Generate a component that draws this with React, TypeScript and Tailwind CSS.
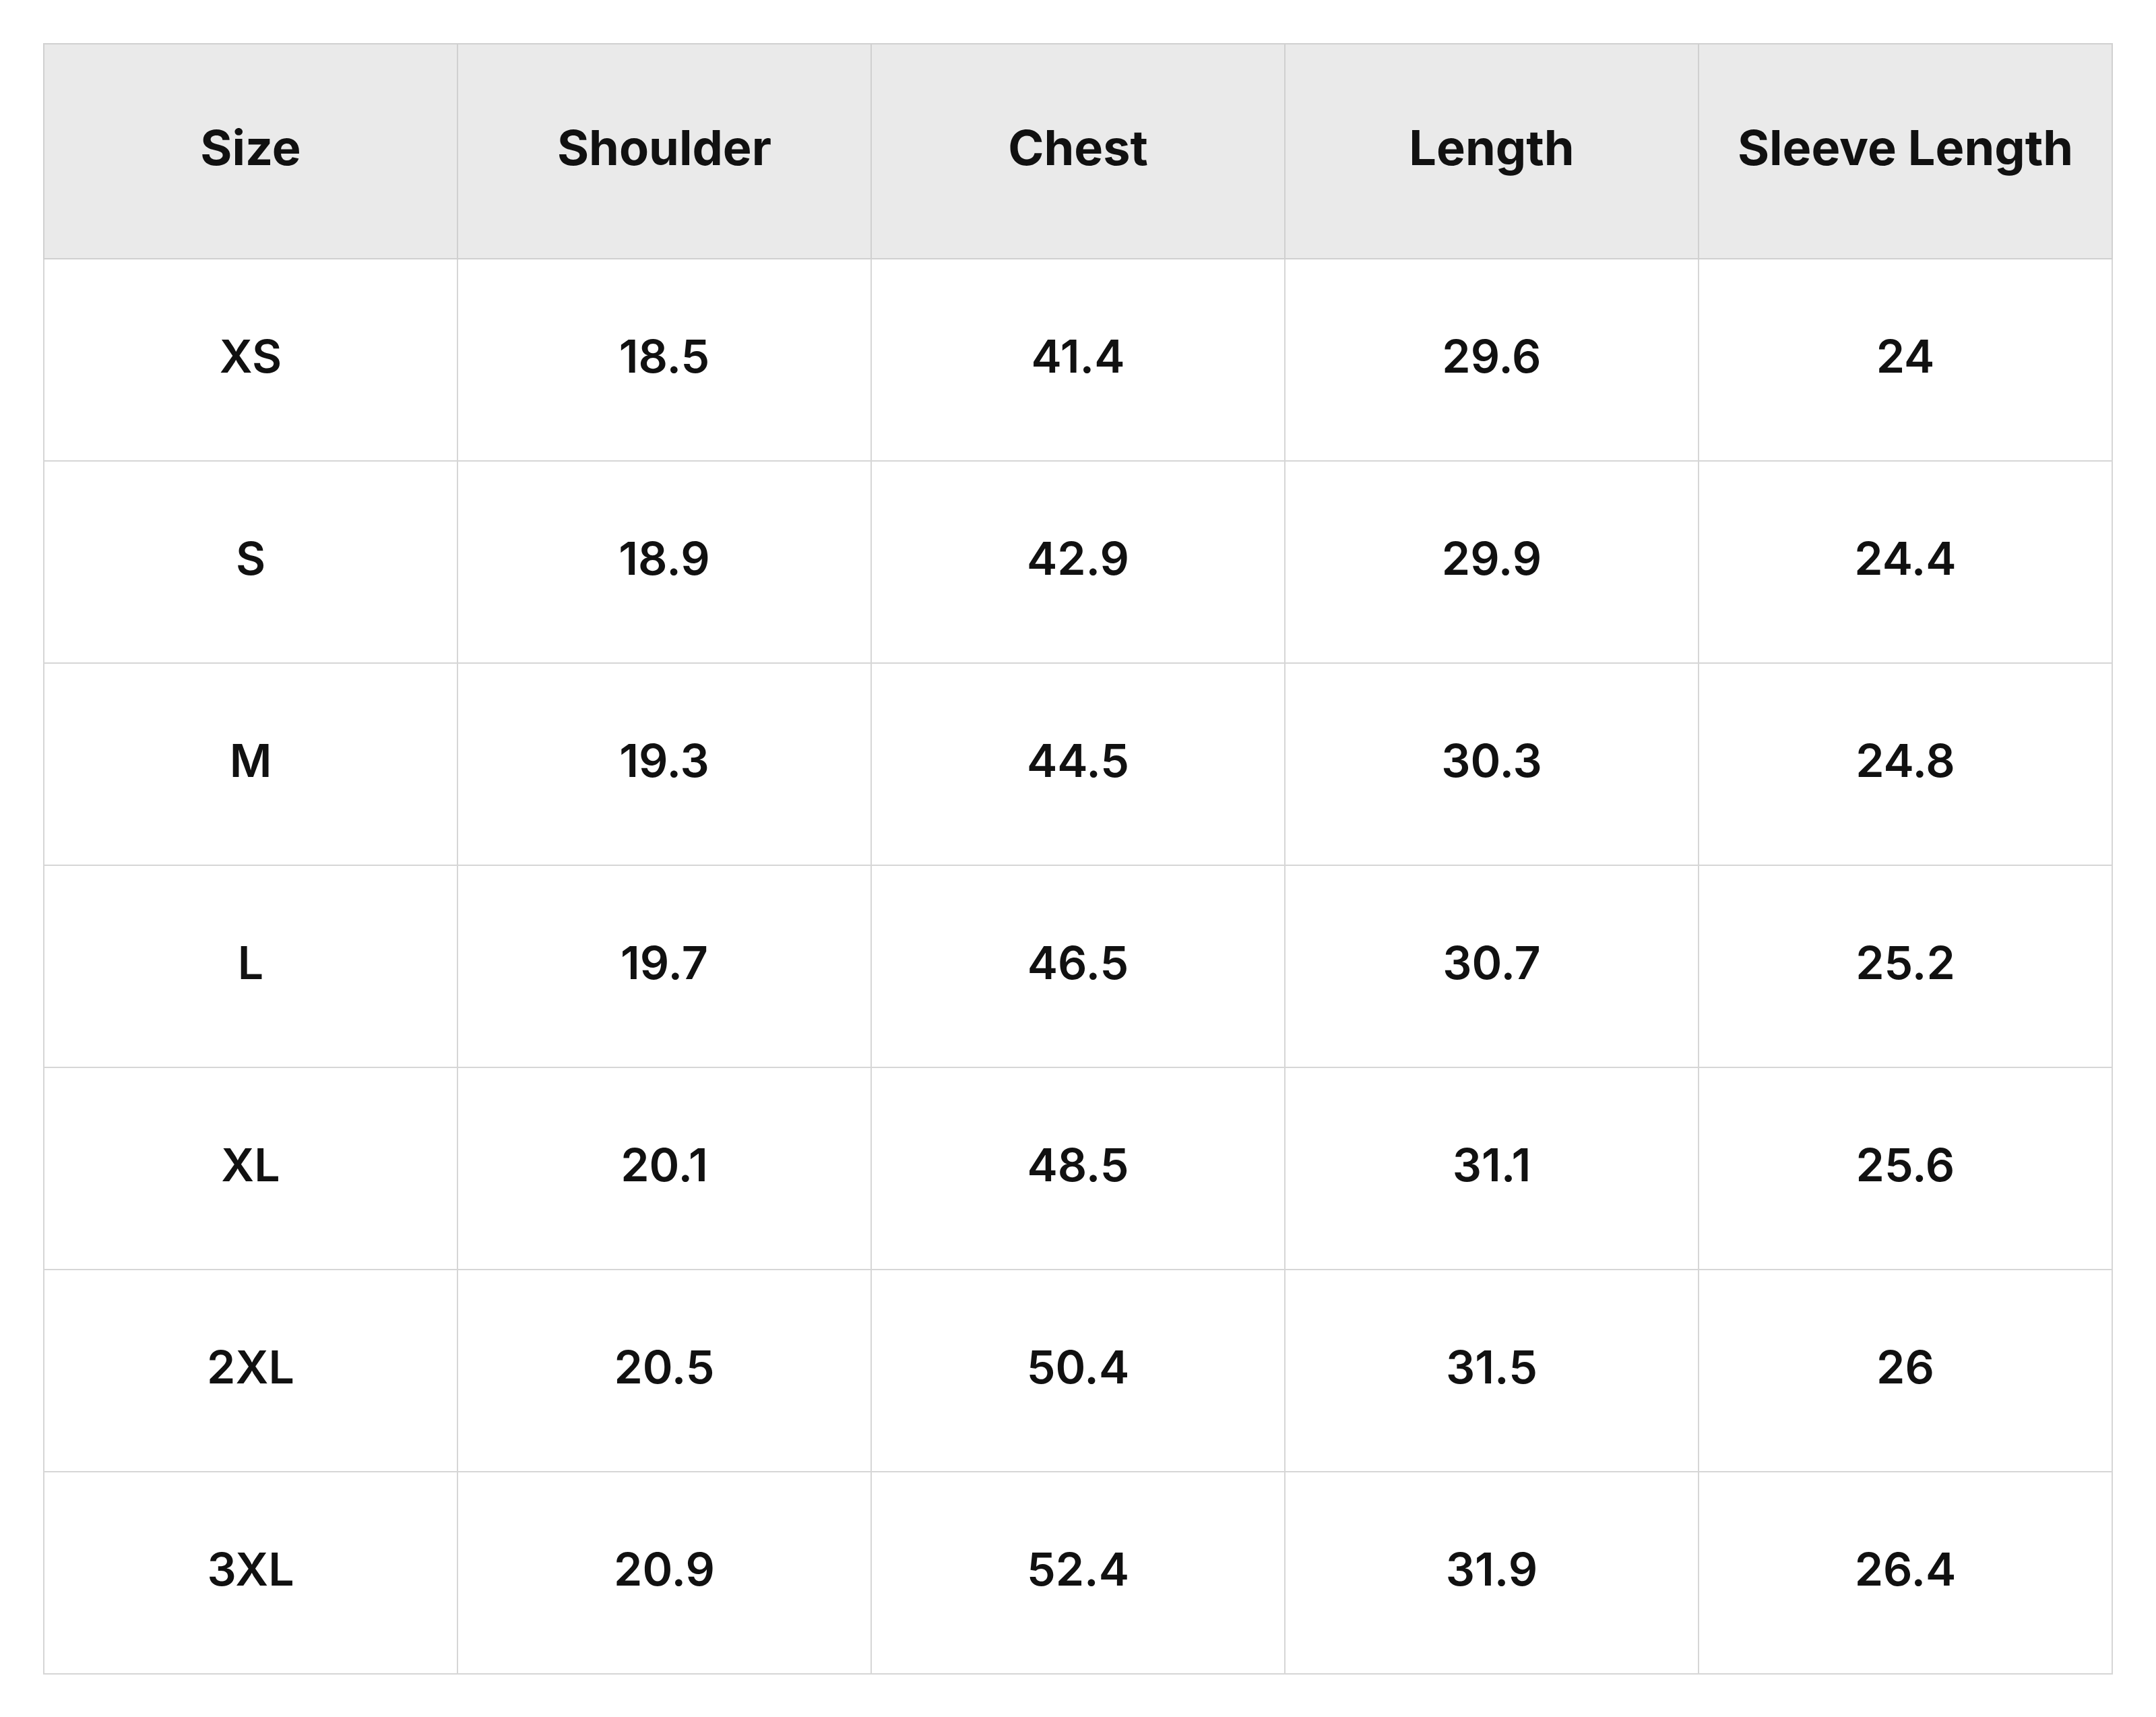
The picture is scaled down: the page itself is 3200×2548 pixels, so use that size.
const headers = ["Size", "Shoulder", "Chest", "Length", "Sleeve Length"]

const rows = [
  ["XS", "18.5", "41.4", "29.6", "24"],
  ["S", "18.9", "42.9", "29.9", "24.4"],
  ["M", "19.3", "44.5", "30.3", "24.8"],
  ["L", "19.7", "46.5", "30.7", "25.2"],
  ["XL", "20.1", "48.5", "31.1", "25.6"],
  ["2XL", "20.5", "50.4", "31.5", "26"],
  ["3XL", "20.9", "52.4", "31.9", "26.4"],
]

export default function App() {
  return (
    <div className="min-h-screen bg-white px-[64px] pt-[64px] font-['Inter',sans-serif] text-[#111111]">
      <table className="w-[3072px] table-fixed border-collapse border-2 border-[#cccccc]">
        <thead>
          <tr className="bg-[#eaeaea]">
            {headers.map((h) => (
              <th
                key={h}
                className="h-[319px] border-2 border-[#d0d0d0] pb-[12px] text-center text-[72px] font-bold"
              >
                {h}
              </th>
            ))}
          </tr>
        </thead>
        <tbody>
          {rows.map((row) => (
            <tr key={row[0]}>
              {row.map((cell, i) => (
                <td
                  key={i}
                  className="h-[300px] border-2 border-[#d6d6d6] pb-[12px] text-center text-[68px] font-semibold"
                >
                  {cell}
                </td>
              ))}
            </tr>
          ))}
        </tbody>
      </table>
    </div>
  )
}
